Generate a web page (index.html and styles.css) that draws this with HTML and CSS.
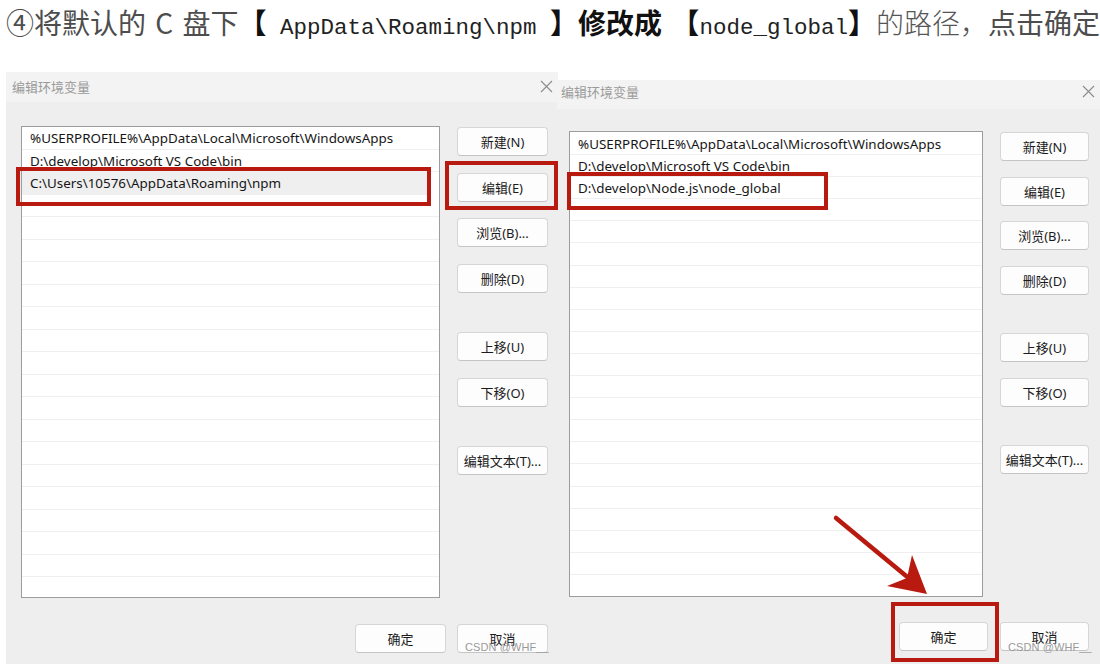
FILE: index.html
```html
<!DOCTYPE html>
<html lang="zh-CN">
<head>
<meta charset="utf-8">
<title>编辑环境变量</title>
<link rel="stylesheet" href="styles.css">
</head>
<body>
<div class="page">
  <p class="heading"><span class="h-gray">④将默认的 C 盘下</span><span class="h-br">【</span><span class="h-mono"> AppData\Roaming\npm </span><span class="h-br">】</span><span class="h-bold">修改成 </span><span class="h-br">【</span><span class="h-mono">node_global</span><span class="h-br">】</span><span class="h-serif">的路径，</span><span class="h-gray">点击确定</span></p>

  <div class="dlg dlg-l">
    <div class="titlebar"><span class="title">编辑环境变量</span><svg class="close" width="13" height="13" viewBox="0 0 13 13"><path d="M1 1 L12 12 M12 1 L1 12" stroke="#8c8c8c" stroke-width="1.1" fill="none"/></svg></div>
    <div class="dlg-body">
      <div class="main">
        <div class="list">
          <div class="row">%USERPROFILE%\AppData\Local\Microsoft\WindowsApps</div>
          <div class="row">D:\develop\Microsoft VS Code\bin</div>
          <div class="row sel">C:\Users\10576\AppData\Roaming\npm</div>
          <div class="row"></div><div class="row"></div><div class="row"></div><div class="row"></div>
          <div class="row"></div><div class="row"></div><div class="row"></div><div class="row"></div>
          <div class="row"></div><div class="row"></div><div class="row"></div><div class="row"></div>
          <div class="row"></div><div class="row"></div><div class="row"></div><div class="row"></div>
          <div class="row"></div><div class="row"></div>
        </div>
        <div class="side">
          <button class="btn">新建(N)</button>
          <button class="btn">编辑(E)</button>
          <button class="btn">浏览(B)...</button>
          <button class="btn">删除(D)</button>
          <button class="btn btn-sep">上移(U)</button>
          <button class="btn">下移(O)</button>
          <button class="btn btn-sep">编辑文本(T)...</button>
        </div>
      </div>
      <div class="footer">
        <button class="btn">确定</button>
        <button class="btn">取消</button>
      </div>
    </div>
  </div>

  <div class="dlg dlg-r">
    <div class="titlebar"><span class="title">编辑环境变量</span><svg class="close" width="13" height="13" viewBox="0 0 13 13"><path d="M1 1 L12 12 M12 1 L1 12" stroke="#8c8c8c" stroke-width="1.1" fill="none"/></svg></div>
    <div class="dlg-body">
      <div class="main">
        <div class="list">
          <div class="row">%USERPROFILE%\AppData\Local\Microsoft\WindowsApps</div>
          <div class="row">D:\develop\Microsoft VS Code\bin</div>
          <div class="row">D:\develop\Node.js\node_global</div>
          <div class="row"></div><div class="row"></div><div class="row"></div><div class="row"></div>
          <div class="row"></div><div class="row"></div><div class="row"></div><div class="row"></div>
          <div class="row"></div><div class="row"></div><div class="row"></div><div class="row"></div>
          <div class="row"></div><div class="row"></div><div class="row"></div><div class="row"></div>
          <div class="row"></div><div class="row"></div>
        </div>
        <div class="side">
          <button class="btn">新建(N)</button>
          <button class="btn">编辑(E)</button>
          <button class="btn">浏览(B)...</button>
          <button class="btn">删除(D)</button>
          <button class="btn btn-sep">上移(U)</button>
          <button class="btn">下移(O)</button>
          <button class="btn btn-sep">编辑文本(T)...</button>
        </div>
      </div>
      <div class="footer">
        <button class="btn">确定</button>
        <button class="btn">取消</button>
      </div>
    </div>
  </div>

  <div class="mark mark-l-row"></div>
  <div class="mark mark-l-btn"></div>
  <div class="mark mark-r-row"></div>
  <div class="mark mark-r-ok"></div>

  <span class="wm wm-l">CSDN @WHF__</span>
  <span class="wm wm-r">CSDN @WHF__</span>

  <svg class="arrow" width="1100" height="664" viewBox="0 0 1100 664">
    <path d="M836 518 L911 580" stroke="#b81a10" stroke-width="4.5" stroke-linecap="round" fill="none"/>
    <polygon points="927,594 887,586 907,578 912,555" fill="#b81a10"/>
  </svg>
</div>
</body>
</html>
```

FILE: styles.css
```css
* { box-sizing: border-box; }

html, body {
  margin: 0;
  padding: 0;
  background: #ffffff;
}

.page {
  position: relative;
  width: 1100px;
  height: 664px;
  overflow: hidden;
  font-family: "Noto Sans", "Noto Sans CJK SC", sans-serif;
}

/* ---------- heading ---------- */
.heading {
  margin: 0;
  padding: 4px 0 0 6px;
  font-size: 28px;
  line-height: 36px;
  word-spacing: 3px;
  white-space: nowrap;
  font-family: "Noto Sans CJK SC", sans-serif;
  color: #4d4d4d;
}
.h-gray { color: #4d4d4d; }
.h-br { color: #111111; font-weight: 700; }
.h-mono {
  font-family: "Liberation Mono", "Noto Sans CJK SC", monospace;
  font-size: 22.5px;
  word-spacing: 0;
  color: #222222;
  white-space: pre;
}
.h-bold { color: #111111; font-weight: 700; }
.h-serif { color: #555555; font-weight: 300; }

/* ---------- dialogs ---------- */
.dlg {
  position: absolute;
  background: #eeeeee;
  display: flex;
  flex-direction: column;
}
.dlg-l { left: 6px; top: 72px; width: 552px; height: 592px; }
.dlg-r { left: 557px; top: 80px; width: 543px; height: 584px; }

.titlebar {
  display: flex;
  align-items: center;
  justify-content: space-between;
  background: #f3f3f3;
  height: 30px;
  padding: 0 5px 2px 6px;
  font-family: "Noto Sans CJK SC", sans-serif;
}
.dlg-r .titlebar { height: 29px; padding: 0 5px 7px 4px; }

.title {
  font-size: 13px;
  color: #9b9b9b;
}
.close {
  display: block;
}

.dlg-body {
  display: flex;
  flex-direction: column;
  padding: 24px 10px 0 15px;
}
.dlg-r .dlg-body { padding: 22px 11px 0 12px; }

.main {
  display: flex;
  gap: 17px;
}

.list {
  width: 419px;
  height: 472px;
  background: #ffffff;
  border: 1px solid #9c9c9c;
  overflow: hidden;
}
.dlg-r .list { width: 414px; height: 466px; padding-top: 1px; }

.row {
  height: 22.5px;
  line-height: 21px;
  padding: 1px 0 0 8px;
  font-size: 13.4px;
  color: #161616;
  border-bottom: 1.5px solid #efefef;
  white-space: nowrap;
}
.dlg-r .row { height: 22.1px; }
.row.sel {
  background: #efefef;
  margin-right: 12px;
}

.side {
  display: flex;
  flex-direction: column;
  gap: 16.5px;
  padding-top: 1px;
}
.dlg-r .side { gap: 15.5px; }

.btn {
  width: 91px;
  height: 29px;
  margin: 0;
  padding: 0;
  background: #fdfdfd;
  border: 1px solid #d6d6d6;
  border-bottom-color: #c4c4c4;
  border-radius: 4px;
  font-family: "Noto Sans", "Noto Sans CJK SC", sans-serif;
  font-size: 13px;
  color: #1b1b1b;
  text-align: center;
}
.dlg-r .btn { width: 89px; }
.btn-sep { margin-top: 23px; }

.footer {
  display: flex;
  justify-content: flex-end;
  gap: 11px;
  padding-top: 26px;
}
.dlg-r .footer { gap: 12px; padding-top: 25px; }

/* ---------- annotations ---------- */
.mark {
  position: absolute;
  border: 4px solid #b81a10;
}
.mark-l-row { left: 16px; top: 167px; width: 415px; height: 39px; }
.mark-l-btn { left: 445px; top: 161px; width: 113px; height: 49px; }
.mark-r-row { left: 567px; top: 172px; width: 261px; height: 38px; }
.mark-r-ok { left: 891px; top: 602px; width: 108px; height: 60px; }

.wm {
  position: absolute;
  font-family: "Liberation Sans", sans-serif;
  font-size: 11px;
  line-height: 12px;
  color: #9a9a9a;
  letter-spacing: 0.1px;
}
.wm-l { left: 465px; top: 641px; }
.wm-r { left: 1008px; top: 641px; }

.arrow {
  position: absolute;
  left: 0;
  top: 0;
  pointer-events: none;
}
```
